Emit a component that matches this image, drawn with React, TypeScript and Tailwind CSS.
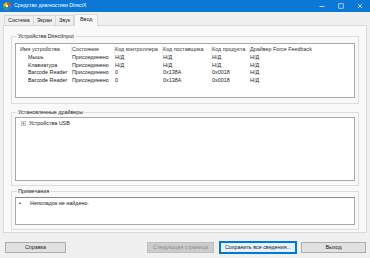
import React from "react";

const cols = [
  { w: "w-[52px]" },
  { w: "w-[43px]" },
  { w: "w-[48px]" },
  { w: "w-[49px]" },
  { w: "w-[38px]" },
];

const header = ["Имя устройства", "Состояние", "Код контроллера", "Код поставщика", "Код продукта", "Драйвер Force Feedback"];
const rows = [
  ["Мышь", "Присоединено", "Н/Д", "Н/Д", "Н/Д", "Н/Д"],
  ["Клавиатура", "Присоединено", "Н/Д", "Н/Д", "Н/Д", "Н/Д"],
  ["Barcode Reader", "Присоединено", "0", "0x138A", "0x0018", "Н/Д"],
  ["Barcode Reader", "Присоединено", "0", "0x138A", "0x0018", "Н/Д"],
];

function DxIcon() {
  return (
    <svg width="8" height="8" viewBox="0 0 8 8" className="ml-[3px] shrink-0">
      <circle cx="4" cy="4" r="3.6" fill="#f4c20d" />
      <path d="M4 0.4 A3.6 3.6 0 0 1 7.6 4 L4 4 Z" fill="#e8412c" />
      <path d="M0.4 4 A3.6 3.6 0 0 0 4 7.6 L4 4 Z" fill="#3aa34a" />
      <path d="M7.6 4 A3.6 3.6 0 0 1 4 7.6 L4 4 Z" fill="#2c6ed6" />
      <circle cx="4" cy="4" r="1.2" fill="#fff" />
    </svg>
  );
}

function Group({ label, children, className }: { label: string; children: React.ReactNode; className?: string }) {
  return (
    <fieldset className={"border border-[#dcdcdc] mx-[7px] px-[3px] " + (className ?? "")}>
      <legend className="ml-[2px] px-[1px] h-[6px] leading-[6px]">{label}</legend>
      {children}
    </fieldset>
  );
}

export default function App() {
  return (
    <div className="w-[370px] h-[258px] bg-[#f0f0f0] flex flex-col font-['Liberation_Sans',Arial,sans-serif] text-[5.4px] leading-none text-[#1a1a1a] overflow-hidden">
      {/* Title bar */}
      <div className="h-[12px] bg-[#0b78d6] flex items-center text-white shrink-0">
        <DxIcon />
        <span className="ml-[3px] text-[5.2px]">Средство диагностики DirectX</span>
        <div className="ml-auto flex h-full items-center">
          <div className="w-[19px] flex justify-center">
            <svg width="6" height="6" viewBox="0 0 6 6"><path d="M0.5 3.5 H5.5" stroke="#fff" strokeWidth="0.7" /></svg>
          </div>
          <div className="w-[19px] flex justify-center">
            <svg width="6" height="6" viewBox="0 0 6 6"><rect x="0.8" y="0.8" width="4.4" height="4.4" fill="none" stroke="#fff" strokeWidth="0.6" /></svg>
          </div>
          <div className="w-[20px] flex justify-center">
            <svg width="6" height="6" viewBox="0 0 6 6"><path d="M0.8 0.8 L5.2 5.2 M5.2 0.8 L0.8 5.2" stroke="#fff" strokeWidth="0.7" /></svg>
          </div>
        </div>
      </div>

      <div className="flex-1 flex flex-col px-[3px]">
        {/* Tabs */}
        <div className="h-[13px] flex items-end pl-[1px] shrink-0">
          <div className="h-[10px] px-[3px] flex items-center border border-b-0 border-[#d9d9d9] bg-[#f0f0f0]">Система</div>
          <div className="h-[10px] px-[3px] flex items-center border border-b-0 border-l-0 border-[#d9d9d9] bg-[#f0f0f0]">Экран</div>
          <div className="h-[10px] px-[3px] flex items-center border border-b-0 border-l-0 border-[#d9d9d9] bg-[#f0f0f0]">Звук</div>
          <div className="h-[12px] px-[5px] -mb-[1px] relative z-10 flex items-center border border-b-0 border-[#d9d9d9] bg-[#f9f9f9] pb-[1px]">Ввод</div>
        </div>
        {/* Panel */}
        <div className="h-[208px] border border-[#d9d9d9] bg-[#f9f9f9] flex flex-col shrink-0 pt-[7px]">
          <Group label="Устройства DirectInput" className="pt-[4px] pb-[5px]">
            <div className="h-[55px] bg-white border border-[#a8a8a8] pt-[1px]">
              <div className="flex h-[9px] items-center pl-[4px] text-[#333]">
                {header.map((h, i) => (
                  <div key={i} className={(i < 5 ? cols[i].w + " border-r border-[#ececec]" : "flex-1") + " h-full flex items-center"}>
                    {h}
                  </div>
                ))}
              </div>
              {rows.map((r, ri) => (
                <div key={ri} className="flex h-[7.5px] items-center pl-[4px] text-[#222]">
                  {r.map((c, i) => (
                    <div key={i} className={(i < 5 ? cols[i].w : "flex-1") + (i === 0 ? " pl-[8px]" : "")}>
                      {c}
                    </div>
                  ))}
                </div>
              ))}
            </div>
          </Group>

          <Group label="Установленные драйверы" className="mt-[5px] pt-[2px] pb-[4px]">
            <div className="h-[64px] bg-white border border-[#a8a8a8] pt-[3px] pl-[5px]">
              <div className="flex items-center gap-[3px]">
                <svg width="5" height="5" viewBox="0 0 5 5">
                  <rect x="0.25" y="0.25" width="4.5" height="4.5" fill="#fff" stroke="#9a9a9a" strokeWidth="0.5" />
                  <path d="M1.2 2.5 H3.8 M2.5 1.2 V3.8" stroke="#555" strokeWidth="0.5" />
                </svg>
                <span>Устройства USB</span>
              </div>
            </div>
          </Group>

          <Group label="Примечания" className="mt-[2px] pt-[3px] pb-[4px]">
            <div className="h-[28px] bg-white border border-[#a8a8a8] border-t-[#888] pt-[3px] pl-[3px]">
              <div className="flex items-center">
                <span className="w-[11px]">•</span>
                <span>Неполадок не найдено.</span>
              </div>
            </div>
          </Group>
        </div>

        {/* Buttons */}
        <div className="flex items-center mt-[9px] h-[11px] shrink-0 -mx-[1px]">
          <div className="w-[61px] h-full ml-[3px] flex items-center justify-center border border-[#adadad] bg-[#e1e1e1]">Справка</div>
          <div className="w-[67px] h-full ml-auto flex items-center justify-center border border-[#bfbfbf] bg-[#cccccc] text-[#8c8c8c]">Следующая страница</div>
          <div className="w-[76px] h-full ml-[6px] flex items-center justify-center border border-[#0078d7] bg-[#e5f1fb] outline outline-[0.5px] outline-[#0078d7]">Сохранить все сведения...</div>
          <div className="w-[65px] h-full ml-[5px] mr-[2px] flex items-center justify-center border border-[#adadad] bg-[#e1e1e1]">Выход</div>
        </div>
      </div>
    </div>
  );
}
